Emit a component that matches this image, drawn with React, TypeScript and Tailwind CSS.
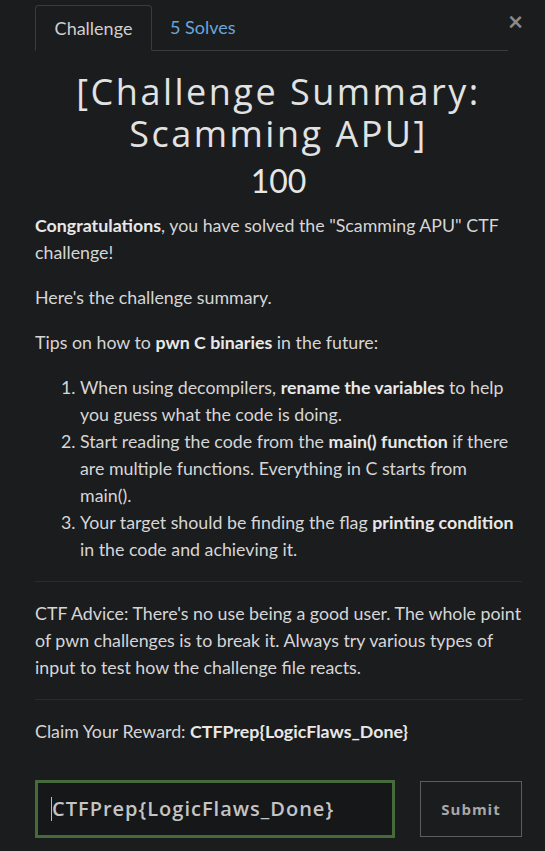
import React from "react";

export default function App() {
  const lato = { fontFamily: "Lato, 'Noto Sans', sans-serif" } as React.CSSProperties;
  return (
    <div className="min-h-[851px] w-[545px] bg-[#1b1c1e] text-[#d6d6d6]" style={lato}>
      <div className="relative pt-[5px] pl-[35px] pr-[23px]">
        <button className="absolute right-[22px] top-[8px] text-[26px] leading-none font-bold text-[#8a8a8a]">×</button>
        <div className="mr-[14px] flex border-b border-[#3a3b3d]">
          <div className="-mb-px flex h-[46px] w-[117px] items-center justify-center rounded-t-[4px] border border-b-transparent border-[#3a3b3d] bg-[#1b1c1e] text-[18px] text-[#cfcfcf]">
            Challenge
          </div>
          <div className="flex h-[45px] items-center pl-[18px] text-[18px] text-[#6aa6dc]">5 Solves</div>
        </div>
        <h1
          className="mt-[20px] text-center text-[36px] leading-[42px] tracking-[2.5px] text-[#e2e2e2]"
          style={{ fontFamily: "'Open Sans', Lato, sans-serif" }}
        >
          [Challenge Summary:
          <br />
          Scamming APU]
        </h1>
        <div className="mt-[5px] text-center text-[32px] leading-[42px] text-[#e6e6e6]">100</div>
        <div className="mt-[10px] text-[17.8px] leading-[27px]">
          <p className="mb-[18px]">
            <b className="font-bold text-[#e8e8e8]">Congratulations</b>, you have solved the "Scamming APU" CTF challenge!
          </p>
          <p className="mb-[18px]">Here's the challenge summary.</p>
          <p className="mb-[18px]">
            Tips on how to <b className="font-bold text-[#e8e8e8]">pwn C binaries</b> in the future:
          </p>
          <ol className="list-decimal pl-[45px] pr-[0px]">
            <li>
              When using decompilers, <b className="font-bold text-[#e8e8e8]">rename the variables</b> to help you guess what the code is doing.
            </li>
            <li>
              Start reading the code from the <b className="font-bold text-[#e8e8e8]">main() function</b> if there are multiple functions. Everything in C starts from main().
            </li>
            <li>
              Your target should be finding the flag <b className="font-bold text-[#e8e8e8]">printing condition</b> in the code and achieving it.
            </li>
          </ol>
          <hr className="mt-[18px] mb-[18px] border-t border-[#2a2b2d]" />
          <p>
            CTF Advice: There's no use being a good user. The whole point of pwn challenges is to break it. Always try various types of input to test how the challenge file reacts.
          </p>
          <hr className="mt-[18px] mb-[18px] border-t border-[#2a2b2d]" />
          <p>
            Claim Your Reward: <b className="font-bold text-[#e8e8e8]">CTFPrep{"{"}LogicFlaws_Done{"}"}</b>
          </p>
        </div>
        <div className="mt-[35px] flex items-center justify-between">
          <div className="flex h-[58px] w-[360px] items-center border-[3px] border-[#466a3a] bg-[#161719] pl-[13px]">
            <span className="h-[24px] w-px bg-[#bbbbbb]" />
            <span
              className="text-[20px] font-semibold tracking-[1px] text-[#c4c4c4]"
              style={{ fontFamily: "'Open Sans', sans-serif" }}
            >
              CTFPrep{"{"}LogicFlaws_Done{"}"}
            </span>
          </div>
          <button
            className="flex h-[56px] w-[102px] items-center justify-center border border-[#5d5d5d] text-[15px] font-bold tracking-[1px] text-[#a8a8a8]"
            style={{ fontFamily: "'Open Sans', sans-serif" }}
          >
            Submit
          </button>
        </div>
      </div>
    </div>
  );
}
